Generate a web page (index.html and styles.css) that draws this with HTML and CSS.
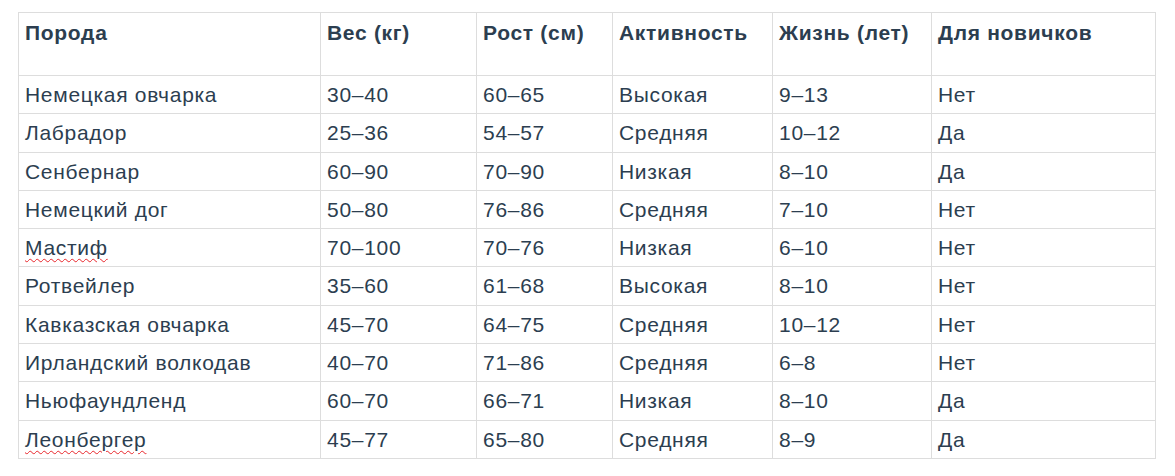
FILE: index.html
```html
<!DOCTYPE html>
<html lang="ru">
<head>
<meta charset="utf-8">
<link rel="stylesheet" href="styles.css">
</head>
<body>
<table class="breeds">
  <colgroup>
    <col class="c1"><col class="c2"><col class="c3"><col class="c4"><col class="c5"><col class="c6">
  </colgroup>
  <thead>
    <tr><th>Порода</th><th>Вес (кг)</th><th>Рост (см)</th><th>Активность</th><th>Жизнь (лет)</th><th>Для новичков</th></tr>
  </thead>
  <tbody>
    <tr><td>Немецкая овчарка</td><td>30–40</td><td>60–65</td><td>Высокая</td><td>9–13</td><td>Нет</td></tr>
    <tr><td>Лабрадор</td><td>25–36</td><td>54–57</td><td>Средняя</td><td>10–12</td><td>Да</td></tr>
    <tr><td>Сенбернар</td><td>60–90</td><td>70–90</td><td>Низкая</td><td>8–10</td><td>Да</td></tr>
    <tr><td>Немецкий дог</td><td>50–80</td><td>76–86</td><td>Средняя</td><td>7–10</td><td>Нет</td></tr>
    <tr><td><span class="spell">Мастиф</span></td><td>70–100</td><td>70–76</td><td>Низкая</td><td>6–10</td><td>Нет</td></tr>
    <tr><td>Ротвейлер</td><td>35–60</td><td>61–68</td><td>Высокая</td><td>8–10</td><td>Нет</td></tr>
    <tr><td>Кавказская овчарка</td><td>45–70</td><td>64–75</td><td>Средняя</td><td>10–12</td><td>Нет</td></tr>
    <tr><td>Ирландский волкодав</td><td>40–70</td><td>71–86</td><td>Средняя</td><td>6–8</td><td>Нет</td></tr>
    <tr><td>Ньюфаундленд</td><td>60–70</td><td>66–71</td><td>Низкая</td><td>8–10</td><td>Да</td></tr>
    <tr><td><span class="spell">Леонбергер</span></td><td>45–77</td><td>65–80</td><td>Средняя</td><td>8–9</td><td>Да</td></tr>
  </tbody>
</table>
</body>
</html>
```
FILE: styles.css
```css
html, body {
  margin: 0;
  background: #ffffff;
}
body {
  padding: 12px 0 0 18px;
  font-family: "Liberation Sans", Arial, sans-serif;
  color: #2c3e50;
}
.breeds {
  border-collapse: collapse;
  table-layout: fixed;
  width: 1137px;
  font-size: 21px;
  letter-spacing: 0.7px;
}
.c1 { width: 302px; }
.c2 { width: 156px; }
.c3 { width: 136px; }
.c4 { width: 160px; }
.c5 { width: 159px; }
.c6 { width: 224px; }
.breeds th,
.breeds td {
  border: 1px solid #dddddd;
  text-align: left;
  vertical-align: top;
  padding: 7px 6px;
  line-height: 23.3px;
  white-space: nowrap;
}
.breeds th {
  font-weight: bold;
  padding: 8px 6px 31px;
  line-height: 23px;
}
.spell {
  text-decoration: underline wavy #e8262b;
  text-decoration-thickness: 1px;
  text-underline-offset: 3px;
}
```
